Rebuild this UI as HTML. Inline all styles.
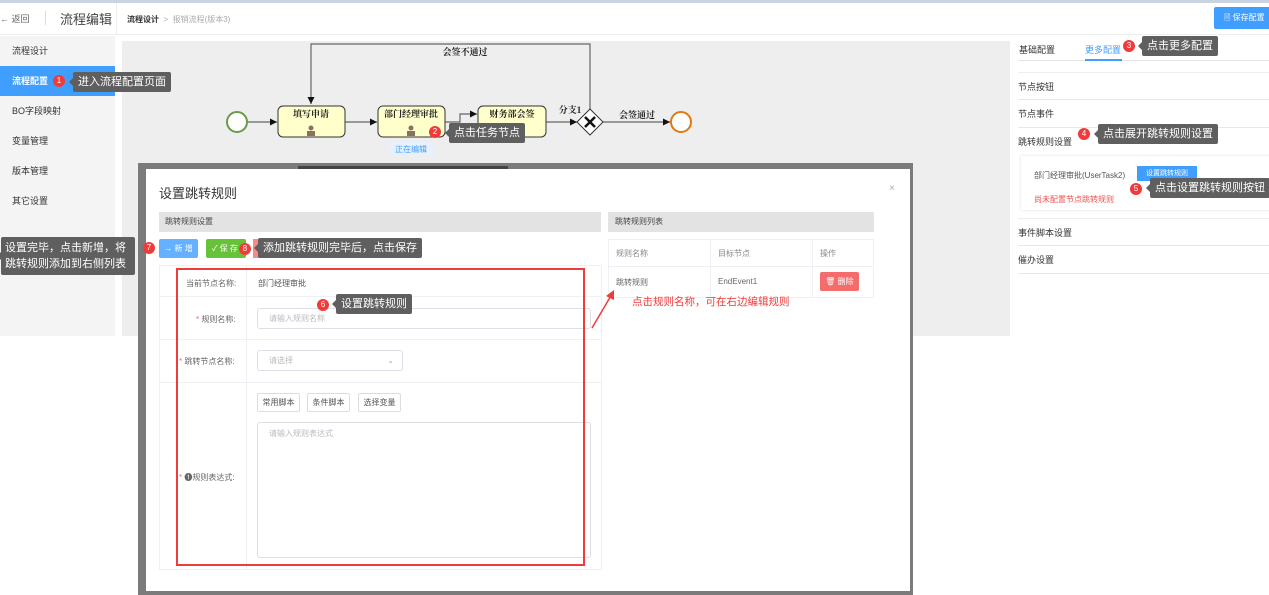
<!DOCTYPE html>
<html><head><meta charset="utf-8"><style>
*{margin:0;padding:0;box-sizing:border-box}
body{width:1269px;height:595px;overflow:hidden;position:relative;background:#fff;font-family:"Liberation Sans","Noto Sans CJK SC",sans-serif;font-size:9px;color:#333}
.a{position:absolute}
.tip{position:absolute;z-index:5;background:#5f5f5f;color:#fff;font-size:11px;padding:3px 5px;border-radius:2px;line-height:14px;white-space:nowrap}
.tip:before{content:"";position:absolute;left:-4px;top:50%;margin-top:-4px;border:4px solid transparent;border-left:0;border-right-color:#5f5f5f}
.n{position:absolute;z-index:6;width:12px;height:12px;border-radius:50%;background:#f03b3b;color:#fff;font-size:8px;text-align:center;line-height:12px}
.side div{height:30px;line-height:30px;padding-left:12px;font-size:9px;color:#333}
.rp{position:absolute;left:1018px;width:251px;font-size:9px;color:#333}
.row{border-bottom:1px solid #e8e8e8}
.btn{position:absolute;border:1px solid #ddd;border-radius:2px;font-size:8px;color:#555;background:#fff;text-align:center;line-height:18px}
</style></head><body>
<div class="a" style="left:0;top:0;width:1269px;height:3px;background:#c9d4e2"></div>
<div class="a" style="left:0;top:3px;width:1269px;height:32px;border-bottom:1px solid #eee"></div>
<div class="a" style="left:0;top:12px;font-size:9px;color:#666">← 返回</div>
<div class="a" style="left:45px;top:11px;width:1px;height:14px;background:#ddd"></div>
<div class="a" style="left:60px;top:9px;font-size:13px;color:#444">流程编辑</div>
<div class="a" style="left:116px;top:3px;width:1px;height:32px;background:#eee"></div>
<div class="a" style="left:127px;top:14px;font-size:8px;color:#333;font-weight:bold">流程设计 <span style="color:#aaa;font-weight:normal">&nbsp;&gt;&nbsp; 报销流程(版本3)</span></div>
<div class="a" style="left:1214px;top:7px;width:60px;height:22px;background:#409eff;border-radius:2px;color:#fff;font-size:8px;line-height:22px;padding-left:10px">🗎 保存配置</div>
<div class="a side" style="left:0;top:36px;width:115px;height:300px;background:#f4f4f4">
<div>流程设计</div><div style="background:#409eff;color:#fff;font-weight:bold">流程配置</div><div>BO字段映射</div><div>变量管理</div><div>版本管理</div><div>其它设置</div></div>
<div class="a" style="left:122px;top:41px;width:888px;height:295px;background:#eeeeee"></div>
<div class="n" style="left:53px;top:75px">1</div>
<div class="tip" style="left:73px;top:72px">进入流程配置页面</div>
<svg class="a" style="left:0;top:0" width="1010" height="170">
<defs><marker id="m" markerWidth="6" markerHeight="6" refX="6" refY="3" orient="auto"><path d="M0,0L6,3L0,6z" fill="#111"/></marker></defs>
<g stroke="#666" fill="none" stroke-width="1.2">
<line x1="247" y1="122" x2="277" y2="122" marker-end="url(#m)"/>
<line x1="345" y1="122" x2="377" y2="122" marker-end="url(#m)"/>
<path d="M445,122H460V114H477" marker-end="url(#m)"/>
<line x1="546" y1="122" x2="577" y2="122" marker-end="url(#m)"/>
<line x1="603" y1="122" x2="670" y2="122" marker-end="url(#m)"/>
<path d="M590,109V44H311V104" marker-end="url(#m)"/>
</g>
<circle cx="237" cy="122" r="10" fill="#fff" stroke="#6a9a4a" stroke-width="2"/>
<circle cx="681" cy="122" r="10" fill="#fff" stroke="#e07b10" stroke-width="2"/>
<g fill="#ffffcc" stroke="#333" stroke-width="1"><rect x="278" y="106" width="67" height="31" rx="5"/><rect x="378" y="106" width="67" height="31" rx="5"/><rect x="478" y="106" width="68" height="31" rx="5"/></g>
<g fill="#222" font-size="9" font-weight="bold" font-family="Liberation Serif,Noto Serif CJK SC,serif" text-anchor="middle">
<text x="311" y="117">填写申请</text><text x="411" y="117">部门经理审批</text><text x="512" y="117">财务部会签</text>
<text x="465" y="55">会签不通过</text><text x="570" y="113">分支1</text><text x="637" y="118">会签通过</text></g>
<g fill="#8a7060"><circle cx="311" cy="128" r="2.5"/><rect x="307" y="131" width="8" height="5"/><circle cx="411" cy="128" r="2.5"/><rect x="407" y="131" width="8" height="5"/></g>
<path d="M590,109L603,122L590,135L577,122z" fill="#fff" stroke="#333"/>
<path d="M585,117L595,127M595,117L585,127" stroke="#111" stroke-width="2.5"/>
<rect x="389" y="142" width="44" height="14" rx="2" fill="#e6f1fd"/>
<text x="411" y="152" font-size="8" fill="#409eff" text-anchor="middle">正在编辑</text>
</svg>
<div class="n" style="left:429px;top:126px">2</div>
<div class="tip" style="left:449px;top:123px">点击任务节点</div>
<div class="rp" style="top:36px;height:25px;border-bottom:1px solid #e4e4e4"></div>
<div class="a" style="left:1019px;top:43px;font-size:9px">基础配置</div>
<div class="a" style="left:1085px;top:43px;font-size:9px;color:#409eff">更多配置</div>
<div class="a" style="left:1085px;top:59px;width:37px;height:2px;background:#409eff"></div>
<div class="n" style="left:1123px;top:40px">3</div>
<div class="tip" style="left:1142px;top:36px">点击更多配置</div>
<div class="rp row" style="top:72px;height:28px;line-height:28px;border-top:1px solid #eee">节点按钮</div>
<div class="rp row" style="top:100px;height:28px;line-height:28px">节点事件</div>
<div class="rp" style="top:128px;height:28px;line-height:28px">跳转规则设置</div>
<div class="n" style="left:1078px;top:128px">4</div>
<div class="tip" style="left:1098px;top:124px">点击展开跳转规则设置</div>
<div class="a" style="left:1021px;top:156px;width:250px;height:54px;box-shadow:0 0 3px #ddd;background:#fff"></div>
<div class="a" style="left:1034px;top:170px;font-size:8px;color:#555">部门经理审批(UserTask2)</div>
<div class="a" style="left:1137px;top:166px;width:60px;height:15px;background:#409eff;color:#fff;font-size:7px;line-height:15px;text-align:center">设置跳转规则</div>
<div class="a" style="left:1034px;top:194px;font-size:8px;color:#f05050">尚未配置节点跳转规则</div>
<div class="n" style="left:1130px;top:183px">5</div>
<div class="tip" style="left:1150px;top:178px">点击设置跳转规则按钮</div>
<div class="rp row" style="top:218px;height:28px;line-height:28px;border-top:1px solid #eee">事件脚本设置</div>
<div class="rp row" style="top:246px;height:28px;line-height:28px">催办设置</div>
<div class="a" style="left:138px;top:163px;width:775px;height:432px;background:#7b7b7b"></div>
<div class="a" style="left:298px;top:166px;width:210px;height:4px;background:#444"></div>
<div class="a" style="left:146px;top:169px;width:764px;height:422px;background:#fff"></div>
<div class="a" style="left:159px;top:183px;font-size:13px;color:#333">设置跳转规则</div>
<div class="a" style="left:889px;top:183px;font-size:10px;color:#aaa">×</div>
<div class="a" style="left:159px;top:212px;width:442px;height:20px;background:#e3e3e3;font-size:8px;line-height:20px;padding-left:6px;color:#444">跳转规则设置</div>
<div class="a" style="left:608px;top:212px;width:266px;height:20px;background:#e3e3e3;font-size:8px;line-height:20px;padding-left:7px;color:#444">跳转规则列表</div>
<div class="a" style="left:159px;top:239px;width:39px;height:19px;background:#66b1ff;color:#fff;border-radius:2px;font-size:8px;line-height:19px;text-align:center">→ 新 增</div>
<div class="a" style="left:206px;top:239px;width:40px;height:19px;background:#67c23a;color:#fff;border-radius:2px;font-size:8px;line-height:19px;padding-left:6px">✓ 保 存</div>
<div class="a" style="left:253px;top:239px;width:12px;height:19px;background:#f78989"></div>
<div class="n" style="left:143px;top:242px">7</div>
<div class="n" style="left:239px;top:243px">8</div>
<div class="tip" style="left:258px;top:238px">添加跳转规则完毕后，点击保存</div>
<div class="tip" style="left:1px;top:237px;padding:3px 4px;line-height:16px;white-space:normal;width:134px">设置完毕，点击新增，将跳转规则添加到右侧列表</div>
<div class="a" style="left:159px;top:265px;width:443px;height:305px;border:1px solid #eef0f5"></div>
<div class="a" style="left:246px;top:265px;width:1px;height:305px;background:#eef0f5"></div>
<div class="a" style="left:159px;top:296px;width:443px;height:1px;background:#eef0f5"></div>
<div class="a" style="left:159px;top:339px;width:443px;height:1px;background:#eef0f5"></div>
<div class="a" style="left:159px;top:382px;width:443px;height:1px;background:#eef0f5"></div>
<div class="a" style="left:186px;top:278px;font-size:8px;color:#666">当前节点名称:</div>
<div class="a" style="left:258px;top:278px;font-size:8px;color:#555">部门经理审批</div>
<div class="a" style="left:196px;top:314px;font-size:8px;color:#666"><span style="color:#f56c6c">*</span> 规则名称:</div>
<div class="a" style="left:257px;top:308px;width:334px;height:21px;border:1px solid #dcdfe6;border-radius:3px;font-size:8px;color:#bbb;line-height:19px;padding-left:11px">请输入规则名称</div>
<div class="a" style="left:179px;top:356px;font-size:8px;color:#666"><span style="color:#f56c6c">*</span> 跳转节点名称:</div>
<div class="a" style="left:257px;top:350px;width:146px;height:21px;border:1px solid #dcdfe6;border-radius:3px;font-size:8px;color:#bbb;line-height:19px;padding-left:11px">请选择<span style="position:absolute;right:8px;color:#aaa">⌄</span></div>
<div class="btn" style="left:257px;top:393px;width:43px;height:19px">常用脚本</div>
<div class="btn" style="left:307px;top:393px;width:43px;height:19px">条件脚本</div>
<div class="btn" style="left:358px;top:393px;width:43px;height:19px">选择变量</div>
<div class="a" style="left:257px;top:422px;width:334px;height:136px;border:1px solid #dcdfe6;border-radius:3px;font-size:8px;color:#bbb;padding:5px 11px">请输入规则表达式</div>
<div class="a" style="left:179px;top:472px;font-size:8px;color:#666"><span style="color:#f56c6c">*</span> ❶规则表达式:</div>
<div class="a" style="left:176px;top:268px;width:409px;height:298px;border:2px solid #f03b3b"></div>
<div class="n" style="left:317px;top:299px">6</div>
<div class="tip" style="left:336px;top:294px">设置跳转规则</div>
<div class="a" style="left:608px;top:239px;width:266px;height:59px;border:1px solid #eef0f5"></div>
<div class="a" style="left:608px;top:266px;width:266px;height:1px;background:#eef0f5"></div>
<div class="a" style="left:710px;top:239px;width:1px;height:59px;background:#eef0f5"></div>
<div class="a" style="left:812px;top:239px;width:1px;height:59px;background:#eef0f5"></div>
<div class="a" style="left:616px;top:248px;font-size:8px;color:#888">规则名称</div>
<div class="a" style="left:718px;top:248px;font-size:8px;color:#888">目标节点</div>
<div class="a" style="left:820px;top:248px;font-size:8px;color:#888">操作</div>
<div class="a" style="left:616px;top:277px;font-size:8px;color:#666">跳转规则</div>
<div class="a" style="left:718px;top:277px;font-size:8px;color:#666">EndEvent1</div>
<div class="a" style="left:820px;top:272px;width:39px;height:19px;background:#f56c6c;color:#fff;border-radius:2px;font-size:8px;line-height:19px;text-align:center">🗑 删除</div>
<svg class="a" style="left:590px;top:290px" width="30" height="40"><path d="M2,38L22,4" stroke="#f03b3b" stroke-width="1.5"/><path d="M24,0L16,6L24,10z" fill="#f03b3b"/></svg>
<div class="a" style="left:632px;top:294px;font-size:10.5px;color:#f03b3b">点击规则名称，可在右边编辑规则</div>
</body></html>
